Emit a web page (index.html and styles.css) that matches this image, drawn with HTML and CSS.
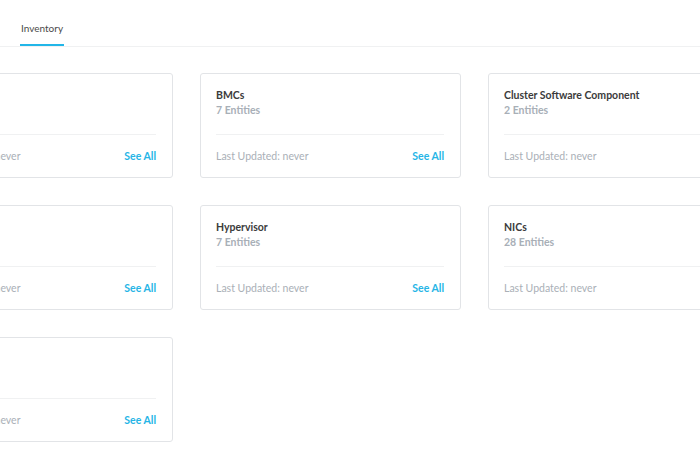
FILE: index.html
```html
<!DOCTYPE html>
<html>
<head>
<meta charset="utf-8">
<link rel="stylesheet" href="styles.css">
</head>
<body>
<div class="page">
  <div class="tabs">
    <div class="tab active">Inventory</div>
  </div>
  <div class="grid">
    <div class="card">
      <div class="card-body"><div class="title">Alerts</div><div class="count">4 Entities</div></div>
      <div class="card-foot"><span class="updated">Last Updated: never</span><a class="see">See All</a></div>
    </div>
    <div class="card">
      <div class="card-body"><div class="title">BMCs</div><div class="count">7 Entities</div></div>
      <div class="card-foot"><span class="updated">Last Updated: never</span><a class="see">See All</a></div>
    </div>
    <div class="card">
      <div class="card-body"><div class="title">Cluster Software Component</div><div class="count">2 Entities</div></div>
      <div class="card-foot"><span class="updated">Last Updated: never</span><a class="see">See All</a></div>
    </div>
    <div class="card">
      <div class="card-body"><div class="title">Disks</div><div class="count">28 Entities</div></div>
      <div class="card-foot"><span class="updated">Last Updated: never</span><a class="see">See All</a></div>
    </div>
    <div class="card">
      <div class="card-body"><div class="title">Hypervisor</div><div class="count">7 Entities</div></div>
      <div class="card-foot"><span class="updated">Last Updated: never</span><a class="see">See All</a></div>
    </div>
    <div class="card">
      <div class="card-body"><div class="title">NICs</div><div class="count">28 Entities</div></div>
      <div class="card-foot"><span class="updated">Last Updated: never</span><a class="see">See All</a></div>
    </div>
    <div class="card">
      <div class="card-body"><div class="title">Nodes</div><div class="count">7 Entities</div></div>
      <div class="card-foot"><span class="updated">Last Updated: never</span><a class="see">See All</a></div>
    </div>
  </div>
</div>
</body>
</html>
```
FILE: styles.css
```css
html, body {
  margin: 0;
  padding: 0;
  background: #ffffff;
}
body {
  font-family: Lato, "Open Sans", sans-serif;
  overflow: hidden;
}
.page {
  width: 700px;
  height: 465px;
  overflow: hidden;
}
.tabs {
  display: flex;
  height: 46px;
  border-bottom: 1px solid #f0f1f2;
  padding-left: 20px;
}
.tab {
  font-size: 10px;
  color: #4a4a4a;
  padding: 21px 1px 0 1px;
  line-height: 14px;
  height: 23px;
  margin-bottom: -1px;
}
.tab.active {
  border-bottom: 2px solid #22b6e8;
}
.grid {
  display: grid;
  grid-template-columns: repeat(3, 261px);
  column-gap: 27px;
  row-gap: 27px;
  margin-left: -88px;
  padding-top: 26px;
  width: 900px;
}
.card {
  border: 1px solid #e2e4e7;
  border-radius: 3px;
  padding: 0 16px 0 15px;
  box-sizing: border-box;
  height: 105px;
  display: flex;
  flex-direction: column;
}
.card-body {
  padding-top: 14px;
  padding-bottom: 16px;
  border-bottom: 1px solid #f0f1f2;
}
.title {
  font-size: 10.5px;
  font-weight: 700;
  color: #3b3b3b;
  line-height: 15px;
  white-space: nowrap;
}
.count {
  font-size: 10.5px;
  font-weight: 700;
  color: #a8afb7;
  line-height: 15px;
}
.card-foot {
  display: flex;
  justify-content: space-between;
  padding-top: 14px;
  font-size: 10.5px;
  line-height: 14px;
}
.updated {
  color: #aab0b7;
  white-space: nowrap;
}
.see {
  color: #26b5e6;
  font-weight: 700;
  white-space: nowrap;
}
```
